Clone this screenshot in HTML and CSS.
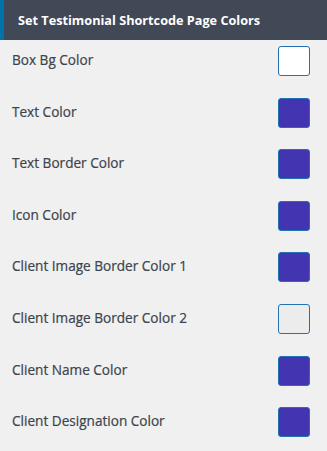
FILE: index.html
```html
<!DOCTYPE html>
<html lang="en">
<head>
  <meta charset="UTF-8" />
  <meta name="viewport" content="width=device-width, initial-scale=1.0" />
  <title>Testimonial Colors</title>
  <link rel="stylesheet" href="styles.css">
</head>
<body>
  <header>Set Testimonial Shortcode Page Colors</header>
  <div class="colors">
    <div class="row"><span class="label">Box Bg Color</span><span class="swatch white"></span></div>
    <div class="row"><span class="label">Text Color</span><span class="swatch"></span></div>
    <div class="row"><span class="label">Text Border Color</span><span class="swatch"></span></div>
    <div class="row"><span class="label">Icon Color</span><span class="swatch"></span></div>
    <div class="row"><span class="label">Client Image Border Color 1</span><span class="swatch"></span></div>
    <div class="row"><span class="label">Client Image Border Color 2</span><span class="swatch light"></span></div>
    <div class="row"><span class="label">Client Name Color</span><span class="swatch"></span></div>
    <div class="row"><span class="label">Client Designation Color</span><span class="swatch"></span></div>
  </div>
</body>
</html>
```

FILE: styles.css
```css
* { box-sizing: border-box; }
body {
  margin: 0;
  font-family: 'Open Sans', 'Noto Sans', sans-serif;
  background: #f0f0f0;
  color: #3c434a;
}
header {
  height: 40px;
  line-height: 40px;
  background: #414856;
  border-left: 4px solid #0073aa;
  color: #fff;
  font-size: 12.7px;
  font-weight: bold;
  padding-left: 14px;
}
.row {
  display: flex;
  align-items: center;
  justify-content: space-between;
  height: 51.6px;
  padding: 6px 17px 15.6px 12px;
}
.label {
  font-size: 13.6px;
  font-weight: 500;
  -webkit-text-stroke: 0.2px #3c434a;
  margin-bottom: 3px;
}
.swatch {
  width: 32px;
  height: 30px;
  border: 1px solid #2271b1;
  border-radius: 3px;
  background: #4335b2;
}
.swatch.white { background: #fff; }
.swatch.light { background: #ececec; }
```
